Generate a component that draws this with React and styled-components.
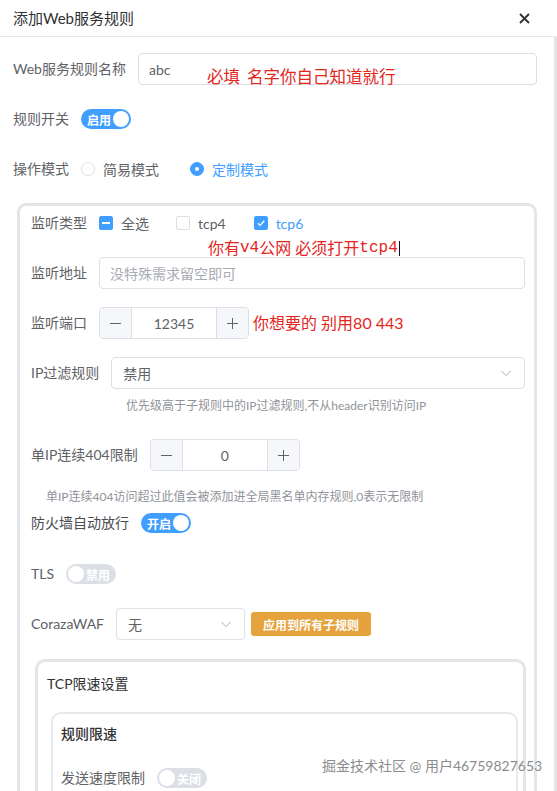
import React from "react";
import styled, { createGlobalStyle } from "styled-components";

const GlobalStyle = createGlobalStyle`
  html, body {
    margin: 0;
    padding: 0;
    height: 100%;
    overflow: hidden;
    background: #fff;
  }
  body {
    font-family: Lato, "Noto Sans CJK SC", sans-serif;
  }
  * {
    box-sizing: border-box;
  }
`;

const Dialog = styled.div`
  position: relative;
  width: 557px;
  height: 791px;
  overflow: hidden;
  background: #fff;
  display: flex;
  flex-direction: column;
`;

const Header = styled.div`
  flex-shrink: 0;
  height: 37px;
  border-bottom: 1px solid #e4e7ed;
  display: flex;
  align-items: center;
  justify-content: space-between;
  padding: 0 27px 0 13px;
`;

const Title = styled.div`
  font-size: 15px;
  line-height: 20px;
  color: #303133;
`;

const Body = styled.div`
  flex: 1;
  overflow: hidden;
  border-right: 3px solid #e2e4e8;
  padding: 16px 17px 0 13px;
`;

const FormItem = styled.div`
  position: relative;
  display: flex;
  align-items: center;
  height: 32px;
  margin-bottom: ${(p) => p.$mb ?? 18}px;
  margin-top: ${(p) => p.$mt ?? 0}px;
`;

const Label = styled.span`
  flex-shrink: 0;
  padding-right: 12px;
  font-size: 14px;
  line-height: 32px;
  white-space: nowrap;
  color: ${(p) => (p.$dark ? "#4a4c51" : "#606266")};
`;

const TextInput = styled.div`
  position: relative;
  flex: 1;
  height: 32px;
  border: 1px solid #dcdfe6;
  border-radius: 4px;
  padding: 0 10px;
  display: flex;
  align-items: center;
  font-size: 14px;
  color: ${(p) => (p.$placeholder ? "#a8abb2" : "#606266")};
`;

const SelectBox = styled.div`
  flex: ${(p) => (p.$width ? "none" : "1")};
  width: ${(p) => (p.$width ? `${p.$width}px` : "auto")};
  height: 32px;
  border: 1px solid #dcdfe6;
  border-radius: 4px;
  padding: 0 12px 0 11px;
  display: flex;
  align-items: center;
  justify-content: space-between;
  font-size: 14px;
  color: #606266;
`;

const NumberBox = styled.div`
  width: 150px;
  height: 32px;
  display: flex;
  border: 1px solid #dcdfe6;
  border-radius: 4px;
  overflow: hidden;
`;

const StepButton = styled.div`
  width: 32px;
  display: flex;
  align-items: center;
  justify-content: center;
  background: #f5f7fa;
  border-left: ${(p) => (p.$side === "right" ? "1px solid #dcdfe6" : "none")};
  border-right: ${(p) => (p.$side === "left" ? "1px solid #dcdfe6" : "none")};
`;

const NumberValue = styled.div`
  flex: 1;
  display: flex;
  align-items: center;
  justify-content: center;
  font-size: 14px;
  color: #606266;
`;

const Annotation = styled.span`
  color: #e3261d;
  font-size: ${(p) => p.$size || 16}px;
  line-height: 18px;
  white-space: nowrap;
  margin-left: ${(p) => p.$gap || 0}px;
  font-family: ${(p) =>
    p.$serif
      ? '"Liberation Mono", "Noto Sans CJK SC", monospace'
      : 'Lato, "Noto Sans CJK SC", sans-serif'};
`;

const FloatingNote = styled.span`
  position: absolute;
  left: 68px;
  top: 14px;
  display: flex;
`;

const NoteLine = styled.div`
  height: 18px;
  padding-left: 177px;
  display: flex;
  align-items: center;
`;

const Caret = styled.span`
  display: inline-block;
  width: 1px;
  height: 15px;
  background: #111;
  margin-left: 1px;
`;

const Radio = styled.span`
  width: 14px;
  height: 14px;
  border-radius: 50%;
  border: 1px solid ${(p) => (p.$checked ? "#409eff" : "#dcdfe6")};
  background: ${(p) => (p.$checked ? "#409eff" : "#fff")};
  display: flex;
  align-items: center;
  justify-content: center;
  &::after {
    content: "";
    width: 4px;
    height: 4px;
    border-radius: 50%;
    background: #fff;
  }
`;

const Choice = styled.label`
  display: flex;
  align-items: center;
  gap: 8px;
  margin-right: ${(p) => p.$mr ?? 30}px;
  font-size: 14px;
  color: ${(p) => (p.$active ? "#409eff" : "#606266")};
`;

const Box = styled.span`
  width: 14px;
  height: 14px;
  border-radius: 2px;
  border: 1px solid ${(p) => (p.$on ? "#409eff" : "#dcdfe6")};
  background: ${(p) => (p.$on ? "#409eff" : "#fff")};
  display: flex;
  align-items: center;
  justify-content: center;
`;

const Bar = styled.span`
  width: 8px;
  height: 2px;
  background: #fff;
`;

const Track = styled.span`
  position: relative;
  width: 50px;
  height: 20px;
  border-radius: 10px;
  background: ${(p) => (p.$on ? "#409eff" : "#dcdfe6")};
  display: flex;
  align-items: center;
  justify-content: ${(p) => (p.$on ? "flex-start" : "flex-end")};
  padding: 0 6px;
  color: #fff;
  font-size: 12px;
  font-weight: 700;
`;

const Knob = styled.span`
  position: absolute;
  top: 2px;
  ${(p) => (p.$on ? "right: 2px;" : "left: 2px;")}
  width: 16px;
  height: 16px;
  border-radius: 50%;
  background: #fff;
`;

const Help = styled.div`
  margin-top: ${(p) => p.$mt}px;
  padding-left: ${(p) => p.$indent}px;
  font-size: 12px;
  line-height: 20px;
  color: #909399;
  white-space: nowrap;
`;

const Card = styled.div`
  margin-left: 4px;
  border: 3px solid #e3e5e9;
  border-radius: 9px;
  padding: 1px 9px 0 11px;
`;

const SubCard = styled.div`
  margin: 0 -1px 0 4px;
  border: 3px solid #e3e5e9;
  border-radius: 10px;
  padding: 12px 5px 0 9px;
`;

const InnerCard = styled.div`
  margin-top: 18px;
  margin-left: 4px;
  border: 2px solid #e6e8eb;
  border-radius: 10px;
  padding: 10px 8px 0 8px;
`;

const CardTitle = styled.div`
  font-size: 14px;
  line-height: 20px;
  color: #303133;
  font-weight: ${(p) => (p.$bold ? 500 : 400)};
`;

const WarnButton = styled.button`
  margin-left: 6px;
  height: 24px;
  padding: 0 12px;
  border: none;
  border-radius: 3px;
  background: #e6a23c;
  color: #fff;
  font-family: inherit;
  font-size: 12px;
  font-weight: 700;
`;

const Watermark = styled.div`
  position: absolute;
  left: 322px;
  top: 757px;
  font-size: 14px;
  line-height: 18px;
  color: #8c8c8c;
  text-shadow: 0 0 1px #fff;
  white-space: nowrap;
`;

const CloseIcon = () => (
  <svg width="11" height="11" viewBox="0 0 11 11">
    <path d="M1 1L10 10M10 1L1 10" stroke="#303133" strokeWidth="1.8" />
  </svg>
);

const Chevron = () => (
  <svg width="12" height="12" viewBox="0 0 12 12">
    <path d="M1.5 4L6 8.5L10.5 4" fill="none" stroke="#a8abb2" strokeWidth="1" />
  </svg>
);

const Minus = () => (
  <svg width="13" height="13" viewBox="0 0 13 13">
    <path d="M1 6.5H12" stroke="#606266" strokeWidth="1" />
  </svg>
);

const Plus = () => (
  <svg width="13" height="13" viewBox="0 0 13 13">
    <path d="M1 6.5H12M6.5 1V12" stroke="#606266" strokeWidth="1" />
  </svg>
);

const Tick = () => (
  <svg width="10" height="10" viewBox="0 0 10 10">
    <path d="M2 5.2L4.2 7.4L8.3 2.8" fill="none" stroke="#fff" strokeWidth="1.3" />
  </svg>
);

const Switch = ({ on, text }) => (
  <Track $on={on}>
    {text}
    <Knob $on={on} />
  </Track>
);

const NumberInput = ({ value }) => (
  <NumberBox>
    <StepButton $side="left">
      <Minus />
    </StepButton>
    <NumberValue>{value}</NumberValue>
    <StepButton $side="right">
      <Plus />
    </StepButton>
  </NumberBox>
);

export default function App() {
  return (
    <Dialog>
      <GlobalStyle />
      <Header>
        <Title>添加Web服务规则</Title>
        <CloseIcon />
      </Header>
      <Body>
        <FormItem>
          <Label>Web服务规则名称</Label>
          <TextInput>
            abc
            <FloatingNote>
              <Annotation $size={16.5}>必填</Annotation>
              <Annotation $size={16.5} $gap={7}>名字你自己知道就行</Annotation>
            </FloatingNote>
          </TextInput>
        </FormItem>
        <FormItem>
          <Label>规则开关</Label>
          <Switch on text="启用" />
        </FormItem>
        <FormItem>
          <Label>操作模式</Label>
          <Choice $mr={31}>
            <Radio />
            简易模式
          </Choice>
          <Choice $active>
            <Radio $checked />
            定制模式
          </Choice>
        </FormItem>

        <Card>
          <FormItem $mb={0}>
            <Label>监听类型</Label>
            <Choice $mr={27}>
              <Box $on>
                <Bar />
              </Box>
              全选
            </Choice>
            <Choice $mr={28}>
              <Box />
              tcp4
            </Choice>
            <Choice $active>
              <Box $on>
                <Tick />
              </Box>
              tcp6
            </Choice>
          </FormItem>
          <NoteLine>
            <Annotation>你有</Annotation>
            <Annotation $serif>v4</Annotation>
            <Annotation>公网 必须打开</Annotation>
            <Annotation $serif>tcp4</Annotation>
            <Caret />
          </NoteLine>
          <FormItem>
            <Label>监听地址</Label>
            <TextInput $placeholder>没特殊需求留空即可</TextInput>
          </FormItem>
          <FormItem>
            <Label>监听端口</Label>
            <NumberInput value="12345" />
            <Annotation $gap={4}>你想要的 别用80 443</Annotation>
          </FormItem>
          <FormItem $mb={0}>
            <Label>IP过滤规则</Label>
            <SelectBox>
              禁用
              <Chevron />
            </SelectBox>
          </FormItem>
          <Help $mt={7} $indent={95}>
            优先级高于子规则中的IP过滤规则,不从header识别访问IP
          </Help>
          <FormItem $mt={23} $mb={0}>
            <Label>单IP连续404限制</Label>
            <NumberInput value="0" />
          </FormItem>
          <Help $mt={16} $indent={15}>
            单IP连续404访问超过此值会被添加进全局黑名单内存规则,0表示无限制
          </Help>
          <FormItem $mb={19}>
            <Label $dark>防火墙自动放行</Label>
            <Switch on text="开启" />
          </FormItem>
          <FormItem>
            <Label>TLS</Label>
            <Switch text="禁用" />
          </FormItem>
          <FormItem $mb={19}>
            <Label>CorazaWAF</Label>
            <SelectBox $width={129}>
              无
              <Chevron />
            </SelectBox>
            <WarnButton>应用到所有子规则</WarnButton>
          </FormItem>

          <SubCard>
            <CardTitle>TCP限速设置</CardTitle>
            <InnerCard>
              <CardTitle $bold>规则限速</CardTitle>
              <FormItem $mt={18}>
                <Label>发送速度限制</Label>
                <Switch text="关闭" />
              </FormItem>
            </InnerCard>
          </SubCard>
        </Card>
      </Body>
      <Watermark>掘金技术社区 @ 用户46759827653</Watermark>
    </Dialog>
  );
}
